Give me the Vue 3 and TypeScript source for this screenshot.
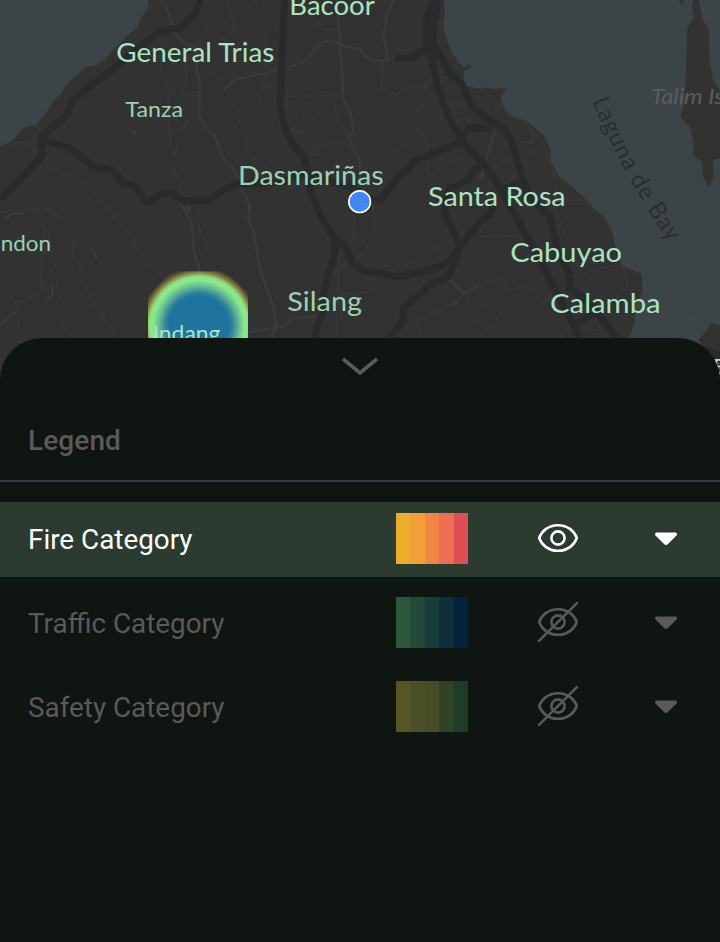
<script setup lang="ts">
interface Category {
  name: string
  colors: string[]
  visible: boolean
}

interface Place {
  name: string
  x: number
  y: number
  size: number
  width: number
  minor?: boolean
}

const categories: Category[] = [
  { name: 'Fire Category', colors: ['#ebae2b', '#f39f37', '#f18546', '#ef6d53', '#df4e57'], visible: true },
  { name: 'Traffic Category', colors: ['#2d5739', '#234939', '#193d3b', '#102d3a', '#05223b'], visible: false },
  { name: 'Safety Category', colors: ['#565526', '#485027', '#454c26', '#2f4327', '#203b28'], visible: false },
]

// Map coordinates run at three units per pixel.
const places: Place[] = [
  { name: 'Bacoor', x: 868, y: 45, size: 80, width: 256 },
  { name: 'General Trias', x: 349, y: 186, size: 80, width: 474 },
  { name: 'Tanza', x: 376, y: 351, size: 65, width: 173, minor: true },
  { name: 'Dasmariñas', x: 714, y: 554, size: 80, width: 437, minor: true },
  { name: 'Santa Rosa', x: 1284, y: 619, size: 80, width: 413 },
  { name: 'Cabuyao', x: 1531, y: 786, size: 80, width: 335 },
  { name: 'Calamba', x: 1650, y: 939, size: 80, width: 332 },
  { name: 'Silang', x: 862, y: 933, size: 80, width: 224, minor: true },
  { name: 'ndon', x: 2, y: 752, size: 65, width: 151, minor: true },
]
</script>

<template>
  <main class="screen">
    <svg class="map" viewBox="0 0 2160 1140" aria-label="Map">
      <defs>
        <radialGradient id="heat" gradientUnits="userSpaceOnUse" cx="597" cy="978" r="180">
          <stop offset="0" stop-color="#20739f" />
          <stop offset=".5" stop-color="#20739f" />
          <stop offset=".56" stop-color="#33849a" />
          <stop offset=".68" stop-color="#68c58f" />
          <stop offset=".77" stop-color="#8bea8e" />
          <stop offset=".83" stop-color="#8fde7d" />
          <stop offset=".89" stop-color="#a1a94f" stop-opacity=".72" />
          <stop offset=".95" stop-color="#a77a2a" stop-opacity=".34" />
          <stop offset="1" stop-color="#a77a2a" stop-opacity="0" />
        </radialGradient>
        <path id="bay-line" d="M1777 302Q1868 530 2012 732" />
      </defs>
      <rect width="2160" height="1140" fill="#323232" />

      <g fill="#3d4447">
        <path d="M0 0H445L442 28L425 50L413 80L375 115L345 145L313 180L285 197L260 200L237 220L205 246L183 279L160 305L147 326L130 347L111 374L80 380L67 384L56 402L32 424L0 441Z" />
        <path d="M1333 0L1334 40L1330 75L1340 120L1356 156L1375 188L1392 203L1410 192L1413 202L1392 212L1390 255L1440 268L1455 262L1485 268L1505 262L1520 268L1503 288L1505 320L1545 355L1570 360L1600 378L1635 410L1650 442L1653 485L1680 535L1705 550L1750 590L1780 625L1810 648L1835 690L1848 745L1866 796L1925 823L1928 880L1905 915L1904 965L1888 1014V1140H2160V0Z" />
      </g>
      <g fill="#323232">
        <path d="M2080 0H2096L2104 35L2105 56L2126 84L2129 180L2140 240L2160 272V475L2139 480L2140 530L2125 565L2121 550L2108 530V488L2080 464L2081 430L2070 380L2042 352L2054 300L2058 210L2062 80L2082 55L2076 20Z" />
        <path d="M2160 975L2135 970L2120 990L2095 1020L2120 1060L2160 1090Z" />
        <path d="M2036 0H2049L2048 19Z" />
      </g>

      <g class="minor-roads">
        <path d="M450 20L475 45L500 58M605 0L608 60L623 88L590 138L555 190L558 235L548 282L595 288M480 100L482 210L504 265L507 400L525 515L541 550V600M680 0L698 60L700 95L665 118L710 125M0 455L60 425L90 435L108 415L120 430M90 435L130 490L240 543L265 548L285 575L292 596L375 682L405 725L410 750L440 797L495 830M0 635L115 627H163L160 638L193 660L220 715L218 763L239 790L244 825L260 855L270 900L312 945V960L338 990L346 1014M115 627L132 665V760L120 820L127 875L70 905H45L54 930V1014M132 690L145 698L157 775L176 820L168 865L188 903L183 965L210 1014M590 620L600 690L620 735L635 795L650 830M620 190L675 265L710 340L730 400L745 465L815 515" />
        <path d="M765 0L800 80V240L775 290L820 380M780 245L860 290L1015 285M850 335L880 395L925 410L963 460L930 463M850 290L895 350M870 395H920L960 315L940 290M1000 290L1010 350L1040 400M915 445L1040 423M925 40L970 90H1010M1150 180L1145 270L1190 285L1230 255H1280L1330 230M1280 240L1260 320L1300 325L1330 370L1400 355M1330 300L1385 315M1260 320L1235 365L1260 390L1230 400L1233 420L1180 465L1130 560M1250 395L1280 410L1285 530L1330 500L1380 470M1120 600V690L1095 760L1040 790L1000 820M1060 640L1065 690L1040 760L1015 770L1010 1014M1095 765L1115 875L1015 885L1025 960M1110 840L1190 805L1255 780L1320 735L1390 700M1260 1014L1255 960L1350 915L1395 880L1450 855L1505 830L1525 870L1595 855L1620 905L1660 890M1405 885L1410 930L1435 970" />
        <path d="M1485 320L1505 310L1520 340L1575 370L1597 390V430L1550 425M1505 315L1480 340M1595 455L1560 460L1490 500M1600 395L1630 430L1655 500L1670 550L1665 625L1720 770L1750 820L1720 830M1590 445L1570 530L1510 550M1720 830L1790 805L1865 796L1885 855L1855 880L1850 915M1610 610L1740 600L1780 610M1440 710L1505 705L1570 710L1585 665M1680 1014L1710 980L1790 990M1440 915L1480 930L1495 970L1440 1000" />
      </g>
      <g class="local-roads">
        <path d="M480 0L500 25L530 110L555 130L590 145V215L600 250L598 350L612 378L645 408L665 470L695 500L718 540M675 268L705 238L850 207L900 190L920 180L960 130L990 120L1040 140L1075 145L1110 182H1170M540 605L575 670L583 760L597 800V850M720 570L740 590L748 620L743 655L760 690L780 810L820 920L829 970L815 1014M1010 0L1025 200L1030 300L1055 350L1060 395L1045 410L1055 440L1080 480V560M1180 0L1160 50L1150 110L1165 180M670 1010L735 998L850 980L875 955L950 950M1440 540L1470 440L1485 395M1350 780L1350 840L1390 880L1440 855" />
      </g>

      <g class="highways">
        <path d="M603 0L584 42L540 87H510L470 100L375 178L215 303L202 344L125 410L128 465L0 600M125 410L138 424L205 442L280 500L338 511L372 550L408 560L440 608L490 580H515L553 603L625 602L665 573L718 550L740 552L850 545L900 520L995 545L1050 560L1115 600L1140 600L1200 525L1225 510L1245 480L1285 467L1375 430L1405 385L1450 383" />
        <path d="M853 0L841 320L857 390L880 435L910 470L923 510L935 585L965 655L1000 710L1038 740L1057 790L1090 812L1200 831L1320 800L1350 780L1440 665L1470 645L1480 610" />
        <path d="M1003 715V765L972 870L968 940L950 980L945 1014M1170 1014L1210 960V925L1275 870L1285 855L1345 830L1363 790L1380 740L1360 690L1335 640V600L1350 565L1405 540L1415 515L1440 500" />
        <path d="M1185 175H1235L1300 132V80L1315 0M1300 0L1280 55V140L1298 180L1310 255L1350 360L1390 430L1450 490L1480 530L1620 780L1740 1014M1300 130L1350 220L1385 250L1415 320L1460 355L1515 388L1535 425L1570 540L1590 590L1650 650L1675 760L1708 820V865L1760 900L1850 1014M1500 575L1560 545M1715 980L1790 935M1440 385H1470" />
      </g>
      <g stroke="#3e4c51" stroke-width="3" fill="none">
        <path d="M390 391L404 403V393M547 390L563 365M526 461L532 440M275 745L290 775M15 655L40 640H70M157 855V888L135 900M0 976L45 935M565 615V638M2075 960L2092 950M1135 575L1145 560M1355 920L1372 905" />
      </g>
      <path d="M2080 1040L2160 1065" stroke="#292a2c" stroke-width="22" />

      <path d="M444 890L500 828L530 814H660L690 828L744 880V1014H444Z" fill="url(#heat)" />
      <text class="place" x="458" y="1023" font-size="65" textLength="203" lengthAdjust="spacingAndGlyphs" fill="#a1dec4">Indang</text>
      <text
        v-for="place in places"
        :key="place.name"
        class="place"
        :class="{ minor: place.minor }"
        :x="place.x"
        :y="place.y"
        :font-size="place.size"
        :textLength="place.width"
        lengthAdjust="spacingAndGlyphs"
      >{{ place.name }}</text>
      <text class="island" x="1953" y="312" textLength="270" lengthAdjust="spacingAndGlyphs">Talim Isla</text>
      <text class="bay"><textPath href="#bay-line" textLength="484">Laguna de Bay</textPath></text>
      <text class="place" x="2139" y="1121" font-size="65">B</text>
      <circle cx="1080" cy="609" r="37" fill="#252525" opacity=".5" />
      <circle cx="1079" cy="605" r="32.5" fill="#4286f5" stroke="#fff" stroke-width="5" />
    </svg>

    <section class="sheet">
      <button class="collapse" aria-label="Collapse legend">
        <svg width="36" height="20" viewBox="0 0 36 20">
          <path d="M1 2L18 16L35 2" fill="none" stroke="#5c5c5c" stroke-width="3.6" />
        </svg>
      </button>
      <h1>Legend</h1>
      <ul>
        <li v-for="category in categories" :key="category.name" :class="{ active: category.visible }">
          <span class="label">{{ category.name }}</span>
          <span class="swatch">
            <i v-for="color in category.colors" :key="color" :style="{ background: color }"></i>
          </span>
          <svg class="eye" width="42" height="42" viewBox="0 0 42 42">
            <path d="M2.200 21C4.500 14.500 11 8.200 21 8.200S37.500 14.500 39.800 21C37.500 27.500 31 33.800 21 33.800S4.500 27.500 2.200 21Z" />
            <circle cx="21" cy="21" r="6.600" />
            <path v-if="!category.visible" d="M1.300 40.700L40.700 1.300" />
          </svg>
          <svg class="caret" width="24" height="16" viewBox="0 0 24 16">
            <path d="M2 1.500H22Q24 3 22.500 4.500L14 13Q12 15 10 13L1.500 4.500Q0 3 2 1.500Z" />
          </svg>
        </li>
      </ul>
    </section>
  </main>
</template>

<style>
body {
  margin: 0;
  background: #0f1511;
}
</style>

<style scoped>
.screen {
  width: 720px;
  height: 942px;
  display: grid;
  grid-template-rows: 338px 604px;
  overflow: hidden;
  font-family: Roboto, "Liberation Sans", sans-serif;
}

.map {
  display: block;
  width: 720px;
  height: 380px;
}

.minor-roads,
.local-roads,
.highways {
  fill: none;
  stroke-linejoin: round;
}

.minor-roads {
  stroke: #393939;
  stroke-width: 4;
}

.local-roads {
  stroke: #3a3a3a;
  stroke-width: 8;
}

.highways {
  stroke: #292a2c;
  stroke-width: 21;
}

.place {
  font-family: Lato, sans-serif;
  fill: #a9e5c1;
}

.place.minor {
  fill: #9dd2b1;
}

.island {
  font: italic 65px Lato, sans-serif;
  fill: #5b5c5d;
}

.bay {
  font: 70px Lato, sans-serif;
  fill: #292d30;
}

.sheet {
  position: relative;
  background: #0f1511;
  border-radius: 42px 42px 0 0;
}

.collapse {
  display: flex;
  box-sizing: border-box;
  justify-content: center;
  width: 100%;
  height: 82px;
  padding: 19px 0 0;
  border: 0;
  background: none;
}

h1 {
  box-sizing: border-box;
  height: 62px;
  margin: 0;
  padding: 1px 28px 0;
  border-bottom: 2px solid #373a48;
  color: #595a59;
  font-size: 28px;
  line-height: 40px;
  font-weight: 500;
  letter-spacing: 0.1px;
}

ul {
  display: grid;
  gap: 9px;
  margin: 20px 0 0;
  padding: 0;
  list-style: none;
}

li {
  display: grid;
  grid-template-columns: 368px 72px 69px 42px 75px 24px;
  align-items: center;
  height: 75px;
  padding-left: 28px;
  color: #595a59;
}

.active {
  background: #2b3b30;
  color: #fff;
}

.label {
  font-size: 27.85px;
  line-height: 40px;
}

.swatch {
  display: grid;
  grid-template-columns: repeat(5, 1fr);
  width: 72px;
  height: 51px;
  margin-top: -2px;
}

.eye {
  grid-column: 4;
  margin-top: -3px;
  fill: none;
  stroke: currentColor;
  stroke-width: 2.6;
}

.caret {
  grid-column: 6;
  margin-top: -2px;
  fill: currentColor;
}
</style>
